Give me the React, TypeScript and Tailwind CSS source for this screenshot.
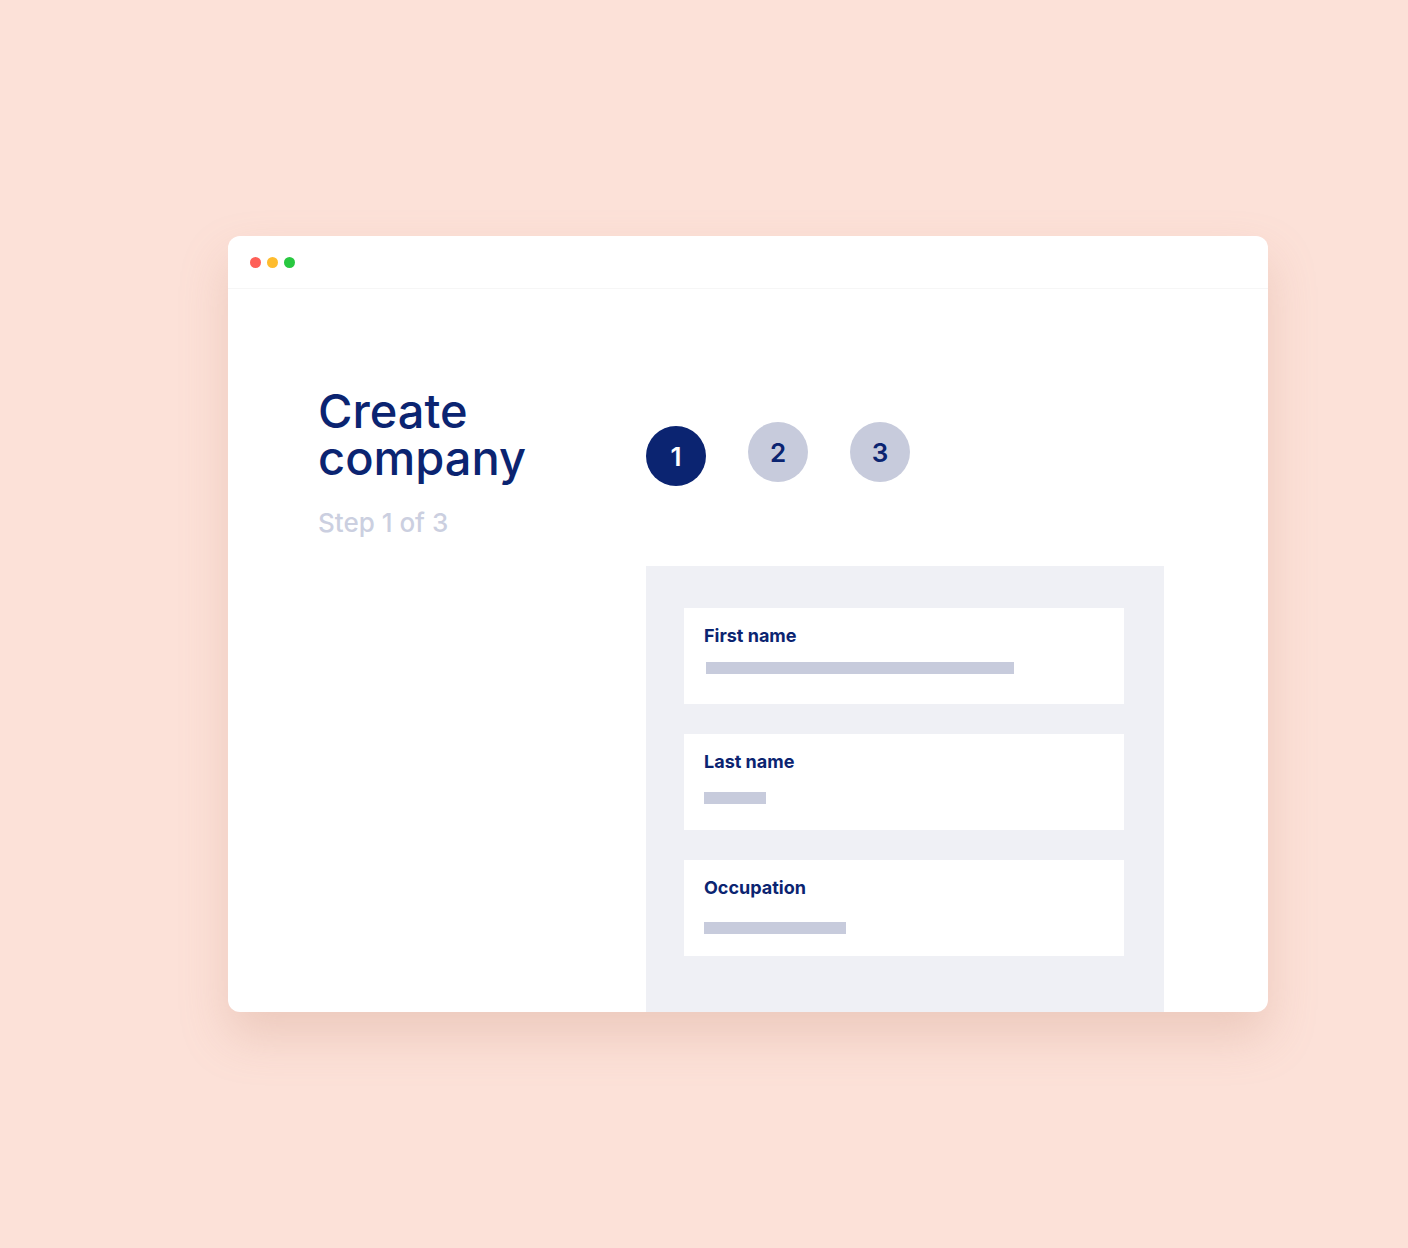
import React from 'react';

const navy = 'text-[#0b2471]';

const steps = [
    { n: 1, active: true, offset: 'mt-[4px]' },
    { n: 2, active: false, offset: 'mt-0' },
    { n: 3, active: false, offset: 'mt-0' },
];

const fields = [
    { label: 'First name', bar: 'w-[308px] ml-[2px] mt-[14px]' },
    { label: 'Last name', bar: 'w-[62px] mt-[18px]' },
    { label: 'Occupation', bar: 'w-[142px] mt-[22px]' },
];

const App: React.FC = () => {
    return (
        <div className="w-[1408px] h-[1248px] bg-[#fce1d8] pt-[236px] pl-[228px] font-['Inter','Liberation_Sans',sans-serif]">
            <div className="w-[1040px] h-[776px] bg-white rounded-[12px] shadow-[0_24px_48px_rgba(196,140,120,0.28)] flex flex-col overflow-hidden">
                {/* title bar */}
                <div className="h-[53px] flex items-center gap-[6px] pl-[22px] border-b border-[#f6f6f6] shrink-0">
                    <span className="w-[11px] h-[11px] rounded-full bg-[#fe5f57]" />
                    <span className="w-[11px] h-[11px] rounded-full bg-[#febc2e]" />
                    <span className="w-[11px] h-[11px] rounded-full bg-[#28c840]" />
                </div>

                <div className="flex flex-1">
                    <div className="w-[418px] pl-[90px] pt-[98px] shrink-0">
                        <h1 className={`text-[47px] leading-[47px] font-medium ${navy}`}>
                            <span className="block h-[47px]">Create</span>
                            <span className="block h-[47px]">company</span>
                        </h1>
                        <p className="mt-[27px] text-[26px] leading-[30px] font-medium text-[#cbcfe0]">Step 1 of 3</p>
                    </div>

                    <div className="flex flex-col w-[518px]">
                        <div className="flex items-start gap-[42px] pt-[133px] h-[277px]">
                            {steps.map((s) => (
                                <div
                                    key={s.n}
                                    className={`w-[60px] h-[60px] rounded-full flex items-center justify-center text-[26px] font-semibold ${s.offset} ${
                                        s.active ? 'bg-[#0b2471] text-white' : 'bg-[#c7cbdc] text-[#0b2471]'
                                    }`}
                                >
                                    {s.n}
                                </div>
                            ))}
                        </div>

                        <div className="flex-1 bg-[#eff0f5] pt-[42px] pl-[38px] flex flex-col gap-[30px]">
                            {fields.map((f) => (
                                <div key={f.label} className="w-[440px] h-[96px] bg-white pl-[20px] pt-[16px]">
                                    <p className={`text-[18px] leading-[24px] font-bold ${navy}`}>{f.label}</p>
                                    <div className={`h-[12px] bg-[#c7cbdc] ${f.bar}`} />
                                </div>
                            ))}
                        </div>
                    </div>
                </div>
            </div>
        </div>
    );
};

export default App;
